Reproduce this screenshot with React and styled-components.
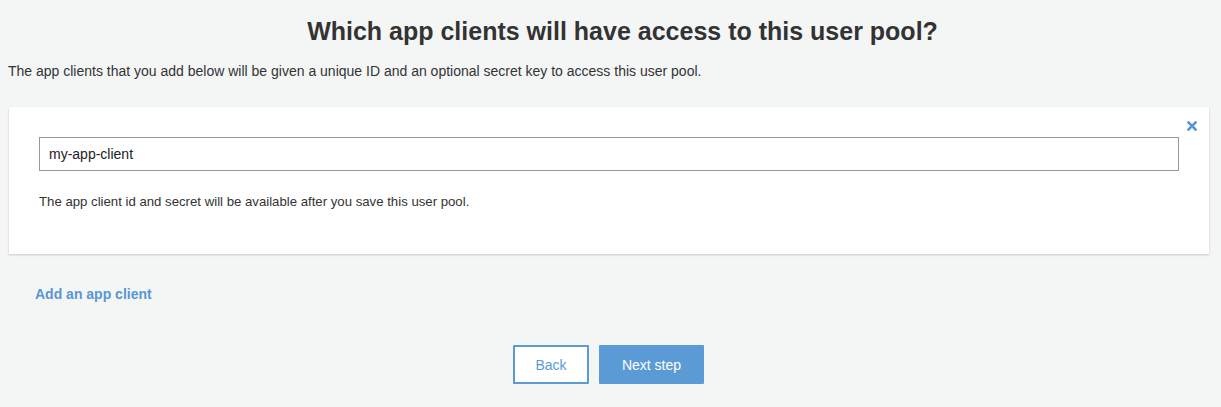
import React from 'react';
import styled, { createGlobalStyle } from 'styled-components';

const GlobalStyle = createGlobalStyle`
    body {
        margin: 0;
        background: #f4f6f6;
        font-family: "Liberation Sans", Arial, Helvetica, sans-serif;
        color: #333;
    }
`;

const Page = styled.div`
    padding: 0 12px 0 8px;
`;

const Title = styled.h1`
    margin: 0;
    padding: 16px 0 0 28px;
    font-size: 25px;
    line-height: 30px;
    font-weight: bold;
    text-align: center;
`;

const Subtitle = styled.p`
    margin: 17px 0 0;
    font-size: 14px;
    line-height: 16px;
`;

const Card = styled.div`
    position: relative;
    margin: 28px 0 0 1px;
    background: #fff;
    box-shadow: 0 1px 2px rgba(0, 0, 0, 0.18);
    padding: 30px 30px 0;
    height: 147px;
    box-sizing: border-box;
`;

const CloseButton = styled.button`
    position: absolute;
    top: 13px;
    right: 11px;
    width: 12px;
    height: 12px;
    padding: 0;
    border: 0;
    background: none;
    cursor: pointer;
    display: flex;
    align-items: center;
    justify-content: center;
`;

const TextInput = styled.input`
    display: block;
    width: 100%;
    box-sizing: border-box;
    height: 34px;
    border: 1px solid #999;
    padding: 0 9px;
    font-family: inherit;
    font-size: 14px;
    color: #222;
    background: #fff;
    outline: none;
`;

const Note = styled.p`
    margin: 23px 0 0;
    font-size: 13.2px;
    line-height: 16px;
`;

const AddLink = styled.a`
    display: inline-block;
    margin: 32px 0 0 27px;
    font-size: 14px;
    line-height: 16px;
    font-weight: bold;
    color: #5a96d2;
    text-decoration: none;
    cursor: pointer;
`;

const Actions = styled.div`
    display: flex;
    justify-content: center;
    gap: 10px;
    margin-top: 42px;
`;

const Button = styled.button`
    height: 39px;
    box-sizing: border-box;
    padding: 0 20px;
    font-family: inherit;
    font-size: 14px;
    border: 2px solid #5b9bd5;
    border-radius: 1px;
    cursor: pointer;
    background: ${(props) => (props.primary ? '#5b9bd5' : '#fff')};
    color: ${(props) => (props.primary ? '#fff' : '#5b9bd5')};
    min-width: ${(props) => (props.primary ? '105px' : '76px')};
`;

const App = () => {
    return (
        <>
            <GlobalStyle />
            <Page>
                <Title>Which app clients will have access to this user pool?</Title>
                <Subtitle>
                    The app clients that you add below will be given a unique ID and an optional
                    secret key to access this user pool.
                </Subtitle>
                <Card>
                    <CloseButton aria-label="Remove">
                        <svg width="10" height="10" viewBox="0 0 10 10">
                            <path
                                d="M1.5 1.5 L8.5 8.5 M8.5 1.5 L1.5 8.5"
                                stroke="#5a96d2"
                                strokeWidth="2.6"
                                strokeLinecap="square"
                            />
                        </svg>
                    </CloseButton>
                    <TextInput defaultValue="my-app-client" />
                    <Note>The app client id and secret will be available after you save this user pool.</Note>
                </Card>
                <AddLink>Add an app client</AddLink>
                <Actions>
                    <Button>Back</Button>
                    <Button primary>Next step</Button>
                </Actions>
            </Page>
        </>
    );
};

export default App;
